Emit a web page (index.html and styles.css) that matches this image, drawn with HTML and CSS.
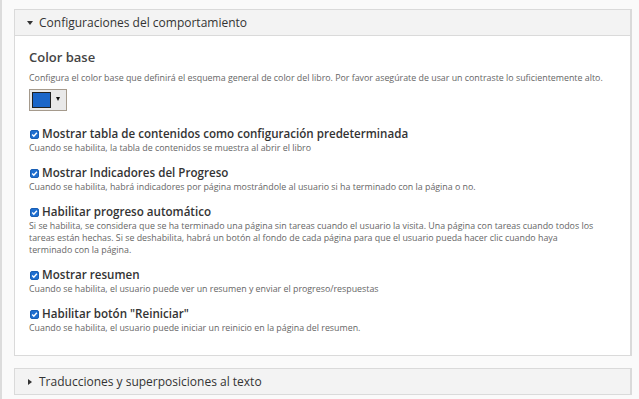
FILE: index.html
```html
<!DOCTYPE html>
<html lang="es">
<head>
<meta charset="utf-8">
<link rel="stylesheet" href="styles.css">
</head>
<body>
<div class="page">
  <section class="panel open">
    <div class="panel-head"><span class="caret down"></span>Configuraciones del comportamiento</div>
    <div class="panel-body">
      <div class="field">
        <div class="field-title">Color base</div>
        <div class="desc">Configura el color base que definirá el esquema general de color del libro. Por favor asegúrate de usar un contraste lo suficientemente alto.</div>
        <div class="color-picker"><span class="swatch"></span><span class="arrow"></span></div>
      </div>
      <div class="option">
        <label class="opt-label"><svg class="cb" viewBox="0 0 9 9"><rect x="0.5" y="0.5" width="8" height="8" rx="1.5" fill="#1f6fd0" stroke="#1a5fb4"/><path d="M2.2 4.6 L3.8 6.2 L6.9 2.8" fill="none" stroke="#fff" stroke-width="1.4"/></svg>Mostrar tabla de contenidos como configuración predeterminada</label>
        <div class="desc">Cuando se habilita, la tabla de contenidos se muestra al abrir el libro</div>
      </div>
      <div class="option">
        <label class="opt-label"><svg class="cb" viewBox="0 0 9 9"><rect x="0.5" y="0.5" width="8" height="8" rx="1.5" fill="#1f6fd0" stroke="#1a5fb4"/><path d="M2.2 4.6 L3.8 6.2 L6.9 2.8" fill="none" stroke="#fff" stroke-width="1.4"/></svg>Mostrar Indicadores del Progreso</label>
        <div class="desc">Cuando se habilita, habrá indicadores por página mostrándole al usuario si ha terminado con la página o no.</div>
      </div>
      <div class="option">
        <label class="opt-label"><svg class="cb" viewBox="0 0 9 9"><rect x="0.5" y="0.5" width="8" height="8" rx="1.5" fill="#1f6fd0" stroke="#1a5fb4"/><path d="M2.2 4.6 L3.8 6.2 L6.9 2.8" fill="none" stroke="#fff" stroke-width="1.4"/></svg>Habilitar progreso automático</label>
        <div class="desc long">Si se habilita, se considera que se ha terminado una página sin tareas cuando el usuario la visita. Una página con tareas cuando todos los tareas están hechas. Si se deshabilita, habrá un botón al fondo de cada página para que el usuario pueda hacer clic cuando haya terminado con la página.</div>
      </div>
      <div class="option">
        <label class="opt-label"><svg class="cb" viewBox="0 0 9 9"><rect x="0.5" y="0.5" width="8" height="8" rx="1.5" fill="#1f6fd0" stroke="#1a5fb4"/><path d="M2.2 4.6 L3.8 6.2 L6.9 2.8" fill="none" stroke="#fff" stroke-width="1.4"/></svg>Mostrar resumen</label>
        <div class="desc">Cuando se habilita, el usuario puede ver un resumen y enviar el progreso/respuestas</div>
      </div>
      <div class="option">
        <label class="opt-label"><svg class="cb" viewBox="0 0 9 9"><rect x="0.5" y="0.5" width="8" height="8" rx="1.5" fill="#1f6fd0" stroke="#1a5fb4"/><path d="M2.2 4.6 L3.8 6.2 L6.9 2.8" fill="none" stroke="#fff" stroke-width="1.4"/></svg>Habilitar botón "Reiniciar"</label>
        <div class="desc">Cuando se habilita, el usuario puede iniciar un reinicio en la página del resumen.</div>
      </div>
    </div>
  </section>
  <section class="panel">
    <div class="panel-head"><span class="caret right"></span>Traducciones y superposiciones al texto</div>
  </section>
</div>
</body>
</html>
```
FILE: styles.css
```css
html, body {
  margin: 0;
  padding: 0;
}
body {
  background: #fafafa;
  font-family: "Open Sans", "Noto Sans", sans-serif;
  color: #333;
  width: 639px;
  height: 399px;
  overflow: hidden;
}
.page {
  border-left: 2px solid #dcdcdc;
  height: 399px;
  box-sizing: border-box;
  padding: 9px 7px 0 12px;
  display: flex;
  flex-direction: column;
  gap: 12px;
}
.panel {
  border: 1px solid #dadada;
  border-right: 2px solid #dadada;
  background: #fff;
}
.panel-head {
  height: 25px;
  background: #f3f3f3;
  display: flex;
  align-items: center;
  font-size: 12px;
  color: #333;
  padding-left: 12px;
}
.panel.open .panel-head {
  border-bottom: 1px solid #dadada;
}
.caret {
  width: 0;
  height: 0;
  margin-right: 6px;
  border-style: solid;
}
.caret.down {
  border-width: 4px 3px 0 3px;
  border-color: #333 transparent transparent transparent;
}
.caret.right {
  border-width: 3px 0 3px 4px;
  border-color: transparent transparent transparent #333;
  margin-left: 1px;
  margin-right: 7px;
}
.panel-body {
  padding: 12px 11px 21px 14px;
}
.field-title {
  font-size: 13px;
  font-weight: 600;
  color: #444;
  line-height: 18px;
}
.desc {
  font-size: 8.85px;
  line-height: 12px;
  color: #666;
}
.desc.long {
  padding-right: 20px;
}
.field .desc {
  margin-top: 6px;
}
.color-picker {
  margin-top: 5px;
  width: 34px;
  height: 20px;
  border: 1px solid #a59a8c;
  background: #e9e9e9;
  display: flex;
  align-items: center;
  padding-left: 2px;
  box-sizing: content-box;
}
.swatch {
  width: 17px;
  height: 14px;
  background: #1b66c9;
  border: 1px solid #222;
}
.arrow {
  margin-left: 5px;
  width: 0;
  height: 0;
  border-style: solid;
  border-width: 4px 2.5px 0 2.5px;
  border-color: #111 transparent transparent transparent;
  margin-top: -3px;
}
.option {
  margin-top: 11px;
}
.field + .option {
  margin-top: 15px;
}
.opt-label {
  display: flex;
  align-items: center;
  font-size: 11.6px;
  font-weight: 600;
  color: #333;
  line-height: 16px;
}
.cb {
  width: 9px;
  height: 9px;
  margin: 0 3px 0 1px;
  flex: none;
}
```
